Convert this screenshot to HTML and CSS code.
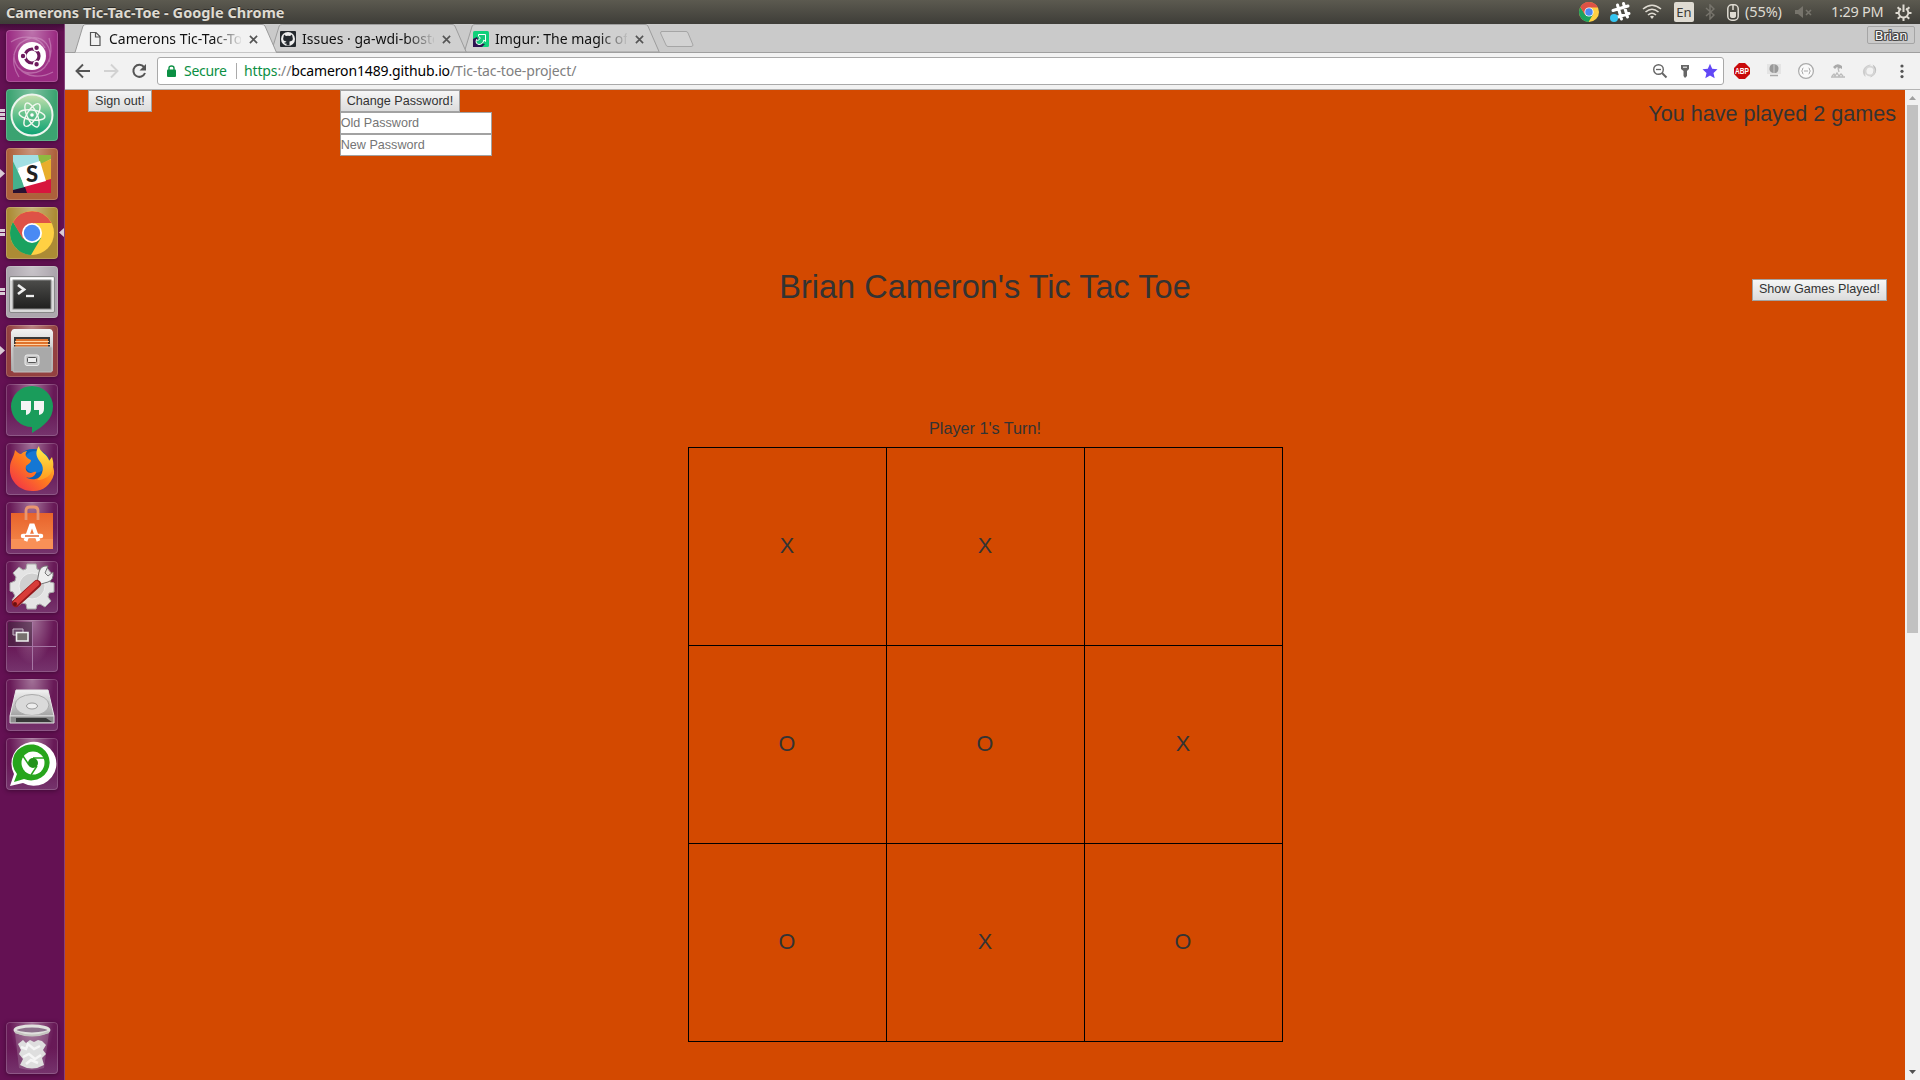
FILE: index.html
```html
<!DOCTYPE html>
<html lang="en">
<head>
<meta charset="utf-8">
<title>Camerons Tic-Tac-Toe</title>
<link rel="stylesheet" href="styles.css">
</head>
<body>
<svg class="defs" width="0" height="0">
  <defs>
    <linearGradient id="green" x1="0" y1="0" x2="0" y2="1"><stop offset="0" stop-color="#c9e2b0"/><stop offset=".5" stop-color="#5fc08a"/><stop offset="1" stop-color="#0ba173"/></linearGradient>
    <linearGradient id="metal" x1="0" y1="0" x2="0" y2="1"><stop offset="0" stop-color="#f2f2f2"/><stop offset="1" stop-color="#a2a2a2"/></linearGradient>
    <linearGradient id="screen" x1="0" y1="0" x2="0" y2="1"><stop offset="0" stop-color="#4c4c4a"/><stop offset="1" stop-color="#20201f"/></linearGradient>
    <linearGradient id="fox" x1="1" y1="0" x2="0" y2="1"><stop offset="0" stop-color="#ffd43a"/><stop offset=".45" stop-color="#ff7d1e"/><stop offset="1" stop-color="#f0254f"/></linearGradient>
    <linearGradient id="flame" x1="0" y1="0" x2="0" y2="1"><stop offset="0" stop-color="#fff04a"/><stop offset="1" stop-color="#ff9a1f"/></linearGradient>
    <linearGradient id="bag" x1="0" y1="0" x2="0" y2="1"><stop offset="0" stop-color="#e8632b"/><stop offset="1" stop-color="#f58a4d"/></linearGradient>
    <symbol id="chrome" viewBox="0 0 44 44">
      <circle cx="22" cy="22" r="22" fill="#ffd043"/>
      <path d="M3 11A22 22 0 0 0 21 44L31 27 13 27Z" fill="#1aa260"/>
      <path d="M3 11 13 28 22 22 24 12H41.500A22 22 0 0 0 3 11Z" fill="#de5246"/>
      <circle cx="22" cy="22" r="10" fill="#fff"/><circle cx="22" cy="22" r="8.200" fill="#4a8af4"/>
    </symbol>
    <symbol id="close" viewBox="0 0 10 10"><path d="M1 1 9 9M9 1 1 9" stroke="#555" stroke-width="1.800"/></symbol>
    <symbol id="tabshape" viewBox="0 0 206 29"><path d="M.5 29 3 28.500 11 2Q12 .5 14 .5H190Q192 .5 193 2L204.500 28.500V29Z"/></symbol>
  </defs>
</svg>

<header class="panel">
  <h1 class="panel-title">Camerons Tic-Tac-Toe - Google Chrome</h1>
  <div class="tray">
    <svg class="tray-chrome" width="20" height="20"><use href="#chrome"/></svg>
    <svg class="tray-slack" width="24" height="24" viewBox="0 0 24 24"><g stroke="#fff" stroke-width="3" stroke-linecap="round"><path d="M9.500 5 13.500 19M15.500 3.500 19.500 17M5 10.500 20 6M8 17.500 21 13.500"/></g><circle cx="6" cy="18" r="4" fill="#36c5f0"/></svg>
    <svg class="tray-wifi" width="20" height="16" viewBox="0 0 20 16" fill="none" stroke="#dfdbd2" stroke-width="1.600"><path d="M1 5Q10-2.500 19 5M3.500 8Q10 2.500 16.500 8M6 11Q10 7.500 14 11"/><path d="M8 12.500Q10 11 12 12.500L10 15Z" fill="#dfdbd2" stroke="none"/></svg>
    <span class="lang">En</span>
    <svg class="tray-bt" width="10" height="16" viewBox="0 0 10 16" fill="none" stroke="#77746c" stroke-width="1.500"><path d="M1 4 9 11 5 15V1L9 5 1 12"/></svg>
    <svg class="tray-mouse" width="12" height="17" viewBox="0 0 12 17" fill="none" stroke="#dfdbd2" stroke-width="1.500"><rect x=".8" y=".8" width="10.400" height="15.400" rx="4"/><path d="M6 1V6"/><path d="M3 8H9V12Q9 14 6 14 3 14 3 12Z" fill="#dfdbd2" stroke="none"/></svg>
    <span class="battery">(55%)</span>
    <svg class="tray-vol" width="18" height="12" viewBox="0 0 18 12"><path d="M0 4H3L8 0V12L3 8H0Z" fill="#77746c"/><path d="M11 4 16 9M16 4 11 9" stroke="#77746c" stroke-width="1.600"/></svg>
    <time class="clock">1:29 PM</time>
    <svg class="tray-gear" width="17" height="17" viewBox="0 0 17 17" fill="none" stroke="#dfdbd2"><path d="M6 4.600A4.800 4.800 0 1 0 11 4.600" stroke-width="1.900"/><path d="M8.500 .5V8" stroke-width="2"/><path d="M.5 9H3.500M13.500 9H16.500M2.600 3.200 4.800 5.300M14.400 3.200 12.200 5.300M2.800 14.800 5 12.600M14.200 14.800 12 12.600M8.500 13.500V17" stroke-width="2"/></svg>
  </div>
</header>

<div class="desktop">
  <nav class="launcher">
    <div class="tile dash"><svg viewBox="0 0 52 52"><g fill="none" stroke="#d7a2cb" stroke-opacity=".5" stroke-width="1.300"><path d="M13 47C3 31 7 12 25 8 38 6 47 17 43 32M43 8C49 27 40 43 25 43 13 43 8 34 8 24M5 12C17 4 33 6 39 18M47 42C36 48 21 48 13 38"/></g><circle cx="26" cy="26" r="14" fill="#fff"/><circle cx="26" cy="26" r="7" fill="none" stroke="#6d1a5d" stroke-width="3.200"/><g fill="#6d1a5d" stroke="#fff" stroke-width="1.400"><circle cx="17" cy="26" r="2.900"/><circle cx="30.600" cy="17.800" r="2.900"/><circle cx="30.600" cy="34.200" r="2.900"/></g></svg></div>
    <div class="tile atom run3"><svg viewBox="0 0 52 52"><circle cx="26" cy="26" r="20.500" fill="url(#green)" stroke="#eef5ee" stroke-width="2"/><g fill="none" stroke="#f2f8ef" stroke-width="1.400"><ellipse cx="26" cy="26" rx="13" ry="5" transform="rotate(8 26 26)"/><ellipse cx="26" cy="26" rx="13" ry="5" transform="rotate(65 26 26)"/><ellipse cx="26" cy="26" rx="13" ry="5" transform="rotate(122 26 26)"/></g><circle cx="26" cy="26" r="1.800" fill="#fff"/></svg></div>
    <div class="tile slack run1"><svg viewBox="0 0 52 52"><rect x="7" y="7" width="38" height="38" rx="2" fill="#fff"/><path d="M7 7H32L35 15 11 23 7 13Z" fill="#a2dfe3"/><path d="M32 7H45V11L34 17Z" fill="#8fb93f"/><path d="M34 16 45 11V32L39 34Z" fill="#e8ae2b"/><path d="M7 13 20 41 7 45Z" fill="#45b08c"/><path d="M18 38 45 31V45H20Z" fill="#d7153e"/><path d="M7 42 19 39 21 45H7Z" fill="#2a1131"/><path d="M12 20 34 13 40 33 18 39Z" fill="#fff"/><text class="slack-s" x="26" y="34" text-anchor="middle">S</text></svg></div>
    <div class="tile chrome run2 focused"><svg viewBox="0 0 52 52"><use href="#chrome" x="4" y="4" width="44" height="44"/></svg></div>
    <div class="tile terminal run2"><svg viewBox="0 0 52 52"><rect x="3.500" y="10.500" width="45" height="36" rx="1.500" fill="#d9d9d9" stroke="#888"/><rect x="4.500" y="11.500" width="43" height="3" fill="#fff"/><rect x="7" y="14" width="38" height="29" fill="url(#screen)" stroke="#8b8b8b"/><path d="M12 19 18 23.500 12 28" fill="none" stroke="#eee" stroke-width="2.800"/><path d="M20 30H28" stroke="#eee" stroke-width="2.300"/></svg></div>
    <div class="tile files run1"><svg viewBox="0 0 52 52"><path d="M5 7Q6 4 8 4H44Q46 4 47 7V46H5Z" fill="url(#metal)"/><rect x="8" y="12" width="36" height="11" fill="#383838"/><path d="M10 14H42V23H9Z" fill="#df722b"/><path d="M9 16.500H43M8 19.500H44" stroke="#ffd2a3" stroke-width="1"/><rect x="7" y="22" width="39" height="25" rx="1" fill="#a9a9a9" stroke="#bfbfbf"/><rect x="19" y="30" width="14" height="10.500" rx="2" fill="#c7c7c7" stroke="#ededed"/><rect x="21.500" y="32.500" width="9" height="5" rx="1" fill="#eee" stroke="#555"/></svg></div>
    <div class="tile plain"><svg viewBox="0 0 52 52"><path d="M26 2A21 20.500 0 0 1 47 22.500C47 35 38 42 26 49V43A21 20.500 0 0 1 26 2Z" fill="#1a9c5b"/><path d="M15 17H25V25Q25 30 20 31V26H15ZM28 17H38V25Q38 30 33 31V26H28Z" fill="#f4f4f4"/></svg></div>
    <div class="tile plain"><svg viewBox="0 0 52 52"><circle cx="27" cy="24" r="18" fill="#075fb8"/><circle cx="29" cy="19" r="11" fill="#1477d4"/><path d="M9 7C11 9 13 11 15 11 18 8 21 8 21 8 18 12 20 15 25 17 25 20 22 21 20 23 19 27 21 30 25 30 29 29 31 28 30 30 27 36 20 36 18 32 22 38 35 39 37 27 38 21 34 16 35 10 44 16 49 24 48 31 45 43 35 49 26 48 13 48 3 37 4 25 4 17 8 15 9 7Z" fill="url(#fox)"/><path d="M33 3C28 10 31 15 35 20 39 26 36 33 31 37 42 37 49 29 47 18L46 14 43 18C42 11 33 9 33 3Z" fill="url(#flame)"/></svg></div>
    <div class="tile plain"><svg viewBox="0 0 52 52"><path d="M5 11H47V47H5Z" fill="url(#bag)"/><path d="M5 37H47V47H5Z" fill="#f99057"/><path d="M20 18V9Q20 5 24 5H28Q32 5 32 9V18" fill="none" stroke="#e99670" stroke-width="2.800"/><path d="M19.500 39 25 23.500H27L32.500 39" fill="none" stroke="#fff" stroke-width="3.800"/><path d="M17 34H35" stroke="#fff" stroke-width="4.500" stroke-linecap="round"/><path d="M19 34H33" stroke="#e56a34" stroke-width="1.500"/></svg></div>
    <div class="tile plain"><svg viewBox="0 0 52 52"><path d="M21 3H30L31 8 35 10 40 6 46 13 42 17 44 21 48 22V31L43 32 42 36 45 40 39 46 34 43 31 44 30 48H21L20 43 16 42 12 45 6 39 9 35 7 31 4 30V22L9 20 10 16 7 12 13 6 17 9 20 8Z" fill="#e4e4e4" stroke="#a9a9a9"/><circle cx="26" cy="25" r="13" fill="#d0d0d0" stroke="#eee"/><path d="M31 22 33 11Q35 4 42 5L39 12 42 15 47 11Q48 19 42 21L35 23Z" fill="#eee" stroke="#777"/><path d="M31 23 10 42" stroke="#94191c" stroke-width="8" stroke-linecap="round"/><path d="M30.500 22.500 10 41.500" stroke="#d83c39" stroke-width="5.500" stroke-linecap="round"/><circle cx="9" cy="43" r="2" fill="#6b1010"/></svg></div>
    <div class="tile plain"><svg viewBox="0 0 52 52"><rect x="2" y="2" width="24" height="24" fill="#3a2337" opacity=".5"/><path d="M2 26.500H50M26.500 2V50" stroke="#a676a4"/><path d="M7 9H17V15H7Z" fill="#6d4a6b" stroke="#c9bac8"/><path d="M10.500 12.500H22V21H10.500Z" fill="#77706e" stroke="#eee" stroke-width="1.600"/></svg></div>
    <div class="tile plain"><svg viewBox="0 0 52 52"><path d="M10 11H42L48 37H4Z" fill="url(#metal)" stroke="#e7e7e7"/><ellipse cx="26" cy="26" rx="17" ry="10.500" fill="#dadada" stroke="#aaa"/><ellipse cx="26" cy="27" rx="5.500" ry="3" fill="#eee" stroke="#999"/><path d="M4 37H48V44H4Z" fill="#8c8c8c" stroke="#ddd"/><path d="M10 39H40L46 43H10Z" fill="#383838"/></svg></div>
    <div class="tile plain"><svg viewBox="0 0 52 52"><path d="M4 48 8 36A22.500 22 0 1 1 17 45Z" fill="#fff"/><path d="M8 44 11 36A18.500 18 0 1 1 18 41Z" fill="#27a51c"/><circle cx="27" cy="25" r="11.500" fill="#fff"/><path d="M27 20H38M23 27 17 18M31 28 25 37" stroke="#27a51c" stroke-width="1.500"/><circle cx="27" cy="25" r="5" fill="#23931b"/></svg></div>
    <div class="tile plain trash"><svg viewBox="0 0 52 52"><path d="M9 11H43L38 46Q26 50 13 46Z" fill="#ddd" opacity=".2"/><path d="M12 22 17 18 20 21 24 18 28 20 32 18 36 19 40 23 37 28 40 32 36 36 38 43Q26 50 14 43L17 37 13 32 15 28Z" fill="#dedede"/><path d="M15 25 20 27 22 22 28 27 34 24M17 35 23 32 29 37 35 33M20 42 25 38 32 41" fill="none" stroke="#f5f5f5" stroke-width="2.500"/><ellipse cx="26" cy="8" rx="17" ry="4" fill="#8c718b" stroke="#e1e1de" stroke-width="3"/><path d="M9 10Q26 17 43 10" fill="none" stroke="#c6c6c1" stroke-width="2"/></svg></div>
  </nav>

  <main class="browser">
    <div class="tabs">
      <div class="tab active"><svg class="tab-bg"><use href="#tabshape"/></svg><svg class="favicon" viewBox="0 0 16 16"><path d="M3.500 1.500H9L13 5.500V14.500H3.500ZM8.500 1.500V6H13" fill="none" stroke="#555" stroke-width="1.200"/></svg><span class="tab-title">Camerons Tic-Tac-Toe</span><svg class="tab-close"><use href="#close"/></svg></div>
      <div class="tab"><svg class="tab-bg"><use href="#tabshape"/></svg><svg class="favicon" viewBox="0 0 16 16"><rect width="16" height="16" rx="1" fill="#24292e"/><circle cx="8" cy="8" r="7" fill="#eee"/><path d="M4 3.500 6 5Q8 4.500 10 5L12 3.500 12.500 6Q14 10 9.500 10.500V14.500H6.500V12.500Q4.500 13 4 11.500 5.500 12 6.500 10.500 2 10 3.500 6Z" fill="#24292e"/></svg><span class="tab-title">Issues · ga-wdi-boston</span><svg class="tab-close"><use href="#close"/></svg></div>
      <div class="tab"><svg class="tab-bg"><use href="#tabshape"/></svg><svg class="favicon" viewBox="0 0 16 16"><rect width="16" height="16" rx="1.500" fill="#0fd07a"/><path d="M0 8 4 6 7 12 12 13 9 16H0Z" fill="#2c1250"/><path d="M5.500 3.500H12.500V10.500L10.800 9Q10 13.500 6 13.500 2 13 3.500 8.500 4.500 11 7.200 7.500 7 6 5.500 5.200Z" fill="#16c77a" stroke="#fff"/></svg><span class="tab-title">Imgur: The magic of the</span><svg class="tab-close"><use href="#close"/></svg></div>
      <svg class="new-tab" width="36" height="18" viewBox="0 0 36 18"><path d="M2.500 1.500H27Q28.500 1.500 29 3L34 15Q34 16.500 32 16.500H9Q7.500 16.500 7 15L1.500 3Q1.500 1.500 3 1.500Z" fill="#d2d2d2" stroke="#a5a5a5"/></svg>
      <span class="profile">Brian</span>
    </div>

    <div class="toolbar">
      <svg class="nav-icon" viewBox="0 0 16 16"><path d="M15 8H2M8 1.500 1.500 8 8 14.500" fill="none" stroke="#555" stroke-width="1.900"/></svg>
      <svg class="nav-icon" viewBox="0 0 16 16"><path d="M1 8H14M8 1.500 14.500 8 8 14.500" fill="none" stroke="#d2d2d2" stroke-width="1.900"/></svg>
      <svg class="nav-icon" viewBox="0 0 16 16"><path d="M13 4A6 6 0 1 0 14 10" fill="none" stroke="#555" stroke-width="2"/><path d="M15 1V7.500H8.500Z" fill="#555"/></svg>
      <div class="omnibox">
        <svg class="lock" width="9" height="12" viewBox="0 0 9 12"><rect y="4.500" width="9" height="7.500" rx="1" fill="#0b8f43"/><path d="M2 5V3Q2 1 4.500 1T7 3V5" fill="none" stroke="#0b8f43" stroke-width="1.400"/></svg>
        <span class="secure">Secure</span><span class="url"><span class="scheme">https</span><span class="dim">://</span><span class="host">bcameron1489.github.io</span><span class="path">/Tic-tac-toe-project/</span></span>
        <div class="omni-actions">
          <svg viewBox="0 0 16 16" fill="none" stroke="#666"><circle cx="6.500" cy="6.500" r="4.800" stroke-width="1.400"/><path d="M10 10 14.500 14.500" stroke-width="2"/><path d="M4 6.500H9" stroke-width="1.300"/></svg>
          <svg viewBox="0 0 16 16"><path d="M4 2H12V6L10 8V13L8 15 6.500 13V8L4 6Z" fill="#666"/><path d="M6 4.200H10" stroke="#fff"/></svg>
          <svg viewBox="0 0 16 16"><path d="M8 .8 10.200 5.800 15.500 6.300 11.500 9.900 12.700 15.200 8 12.400 3.300 15.200 4.500 9.900.5 6.300 5.800 5.800Z" fill="#6147f6"/></svg>
        </div>
      </div>
      <div class="extensions">
        <svg viewBox="0 0 16 16"><path d="M5 0H11L16 5V11L11 16H5L0 11V5Z" fill="#c90a0a"/><text class="abp" x="8" y="11" text-anchor="middle" textLength="14" lengthAdjust="spacingAndGlyphs">ABP</text></svg>
        <svg viewBox="0 0 16 16"><rect x="1" y="1" width="14" height="10" fill="#e4e4e4"/><path d="M8 1Q13 2 12.500 6T9 10H7Q3 9 3.500 5T8 1Z" fill="#999"/><path d="M8 1V10" stroke="#ccc"/><path d="M4 12.500H12" stroke="#aaa" stroke-width="1.500"/></svg>
        <svg viewBox="0 0 16 16" fill="none" stroke="#aaa"><circle cx="8" cy="8" r="7.400" fill="#fafafa" stroke-width="1.200"/><path d="M5.500 5Q4 5 4.500 7L3.500 8 4.500 9Q4 11 5.500 11M10.500 5Q12 5 11.500 7L12.500 8 11.500 9Q12 11 10.500 11M6 8H10"/></svg>
        <svg viewBox="0 0 16 16"><path d="M3 4Q7-1 12 3L12 6 10 5 9 6 7 4 5 6Z" fill="#aaa"/><path d="M8 5 9 9M2 13 4 11 5 13 7 10 9 13 11 11 13 13M1 14H15" fill="none" stroke="#bbb" stroke-width="1.300"/></svg>
        <svg viewBox="0 0 16 16" fill="none"><path d="M10.500 1.500C16 4 15.500 12 8 14.500 12 10 13 6 10.500 1.500Z" fill="#bdbdbd"/><path d="M9 1.500C2 2 -2 9 3.500 14 3 9 4 5 9 1.500Z" fill="#cdcdcd"/><circle cx="8" cy="8" r="4.500" stroke="#d5d5d5" stroke-width="1.800"/></svg>
        <svg viewBox="0 0 16 16" fill="#555"><circle cx="8" cy="3" r="1.600"/><circle cx="8" cy="8.300" r="1.600"/><circle cx="8" cy="13.600" r="1.600"/></svg>
      </div>
    </div>

    <div class="viewport">
      <div class="page">
        <div class="account">
          <button class="btn">Sign out!</button>
          <form class="password-form">
            <button class="btn" type="button">Change Password!</button>
            <input class="field" placeholder="Old Password">
            <input class="field" placeholder="New Password">
          </form>
          <p class="played">You have played 2 games</p>
        </div>
        <div class="heading">
          <h2 class="title">Brian Cameron's Tic Tac Toe</h2>
          <button class="btn">Show Games Played!</button>
        </div>
        <p class="turn">Player 1's Turn!</p>
        <div class="board">
          <div class="cell">X</div><div class="cell">X</div><div class="cell"></div>
          <div class="cell">O</div><div class="cell">O</div><div class="cell">X</div>
          <div class="cell">O</div><div class="cell">X</div><div class="cell">O</div>
        </div>
      </div>
      <div class="scrollbar">
        <svg width="7" height="15" viewBox="0 0 7 15"><path d="M0 10 3.500 6 7 10Z" fill="#a0a0a0"/></svg>
        <div class="thumb"></div>
        <svg width="7" height="15" viewBox="0 0 7 15"><path d="M0 5 3.500 9 7 5Z" fill="#505050"/></svg>
      </div>
    </div>
  </main>
</div>
</body>
</html>
```
FILE: styles.css
```css
* { box-sizing: border-box; }
body { margin: 0; width: 1920px; height: 1080px; overflow: hidden; display: flex; flex-direction: column; font-family: "Liberation Sans", Arial, sans-serif; color: #333; }
svg { display: block; flex: none; }
.defs { position: absolute; }

/* system panel */
.panel { height: 24px; flex: none; display: flex; align-items: center; padding: 0 8px 0 6px; background: linear-gradient(#5c5a50, #3e3d38); color: #dfdbd2; font-family: "Noto Sans", sans-serif; }
.panel-title { margin: 0; font-size: 14.500px; line-height: 24px; font-weight: 700; letter-spacing: .05px; white-space: nowrap; text-shadow: 0 -1px #2c2b28; }
.tray { margin-left: auto; display: flex; align-items: center; }
.tray-slack { margin-left: 9px; }
.tray-wifi { margin-left: 10px; }
.lang { margin-left: 12px; width: 20px; height: 20px; border-radius: 2px; background: #dfdbd2; color: #3c3b37; font-size: 13px; line-height: 21px; text-align: center; }
.tray-bt { margin-left: 11px; }
.tray-mouse { margin-left: 12px; }
.battery { margin-left: 6px; width: 38px; font-size: 14.500px; line-height: 22px; height: 24px; letter-spacing: -.1px; white-space: nowrap; }
.tray-vol { margin-left: 12px; }
.clock { margin-left: 18px; width: 52px; font-size: 14.500px; line-height: 22px; height: 24px; letter-spacing: -.3px; white-space: nowrap; }
.tray-gear { margin-left: 12px; }

.desktop { flex: 1; display: flex; min-height: 0; }

/* launcher */
.launcher { width: 65px; padding: 6px 0 6px 6px; display: flex; flex-direction: column; gap: 7px; background: linear-gradient(#400c38, #641153 8px); border-right: 1px solid #85417a; }
.tile { position: relative; width: 52px; height: 52px; flex: none; border-radius: 4px; box-shadow: inset 0 0 0 1px rgba(255, 255, 255, .18), 0 1px 4px rgba(30, 0, 25, .5); background: radial-gradient(ellipse at 50% 0, rgba(255, 255, 255, .38), rgba(255, 255, 255, .06) 65%), var(--tint, #6a175b); }
.tile svg { width: 52px; height: 52px; }
.plain { background: radial-gradient(ellipse at 50% 0, rgba(255, 255, 255, .4), rgba(255, 255, 255, .02) 60%), linear-gradient(#651554 50%, #73306a); }
.dash { --tint: #951f7b; }
.atom { --tint: #2f9d68; }
.slack { --tint: #a8572f; }
.chrome { --tint: #a78428; }
.terminal { --tint: #a7a0a8; }
.files { --tint: #8c3434; }
.trash { margin-top: auto; }
.slack-s { font: 900 22px Lato, sans-serif; fill: #222; }
.run1::before, .run2::before, .run3::before { content: ""; position: absolute; left: -6px; top: 21px; width: 5px; height: 9px; background: #d9ccd6; clip-path: polygon(0 0, 100% 50%, 0 100%); }
.run2::before { top: 22px; height: 7px; clip-path: none; background: linear-gradient(#d9ccd6 3px, transparent 3px 4px, #d9ccd6 4px); }
.run3::before { top: 20px; height: 11px; clip-path: none; background: linear-gradient(#d9ccd6 3px, transparent 3px 4px, #d9ccd6 4px 7px, transparent 7px 8px, #d9ccd6 8px); }
.focused::after { content: ""; position: absolute; right: -6px; top: 21px; width: 5px; height: 9px; background: #d9ccd6; clip-path: polygon(100% 0, 0 50%, 100% 100%); }

/* browser chrome */
.browser { flex: 1; display: flex; flex-direction: column; min-width: 0; }
.tabs { position: relative; height: 29px; display: flex; padding: 0 5px 0 7px; background: #cacaca; border-bottom: 1px solid #9f9f9f; font-family: "Noto Sans", sans-serif; }
.tab { position: relative; width: 206px; height: 29px; margin-right: -13px; display: flex; align-items: center; padding: 1px 0 0 15px; color: #111; }
.tab:nth-child(2) { z-index: 2; }
.tab:nth-child(3) { z-index: 1; }
.tab.active { z-index: 3; }
.tab-bg { position: absolute; left: 0; top: 0; width: 206px; height: 29px; fill: #d0d0d0; stroke: #9a9a9a; }
.tab:not(.active) .tab-bg { height: 28px; }
.tab.active .tab-bg { fill: #f2f2f2; }
.tab > .favicon, .tab-title, .tab-close { position: relative; }
.favicon { width: 16px; height: 16px; }
.tab-title { width: 132px; margin-left: 6px; padding-bottom: 1px; overflow: hidden; white-space: nowrap; font-size: 14px; line-height: 24px; -webkit-mask-image: linear-gradient(90deg, #000 104px, transparent 134px); mask-image: linear-gradient(90deg, #000 104px, transparent 134px); }
.tab-close { width: 9px; height: 9px; margin-left: 8px; }
.new-tab { margin: 6px 0 0 8px; }
.profile { margin: 2px 0 0 auto; width: 48px; height: 18px; border: 1px solid #a5a5a5; border-radius: 2px; color: #fff; font-size: 13px; line-height: 17px; text-align: center; text-shadow: 1px 0 #444, -1px 0 #444, 0 1px #444, 0 -1px #444, 1px 1px #555, -1px -1px #555, 1px -1px #555, -1px 1px #555; }

.toolbar { height: 37px; display: flex; align-items: center; padding: 0 9px 0 10px; background: #f2f2f2; border-bottom: 1px solid #b4b4b4; font-family: "Noto Sans", sans-serif; }
.nav-icon { width: 16px; height: 16px; margin-right: 12px; }
.omnibox { width: 1567px; height: 28px; margin-left: -2px; padding: 0 5px 0 9px; display: flex; align-items: center; background: #fff; border: 1px solid #a9a9a9; border-radius: 3px; font-size: 14px; white-space: nowrap; }
.secure { margin-left: 8px; width: 53px; height: 16px; line-height: 15px; border-right: 1px solid #aaa; color: #0b8f43; letter-spacing: -.3px; }
.url { margin-left: 7px; padding-bottom: 1px; letter-spacing: -.13px; }
.scheme { color: #0b8f43; }
.dim, .path { color: #808080; }
.host { color: #000; }
.omni-actions { margin-left: auto; display: flex; gap: 9px; }
.omni-actions svg { width: 16px; height: 16px; }
.extensions { margin-left: 10px; display: flex; gap: 16px; }
.extensions svg { width: 16px; height: 16px; }
.abp { font: 700 8.500px "Liberation Sans", sans-serif; fill: #fff; }

/* page */
.viewport { flex: 1; display: flex; min-height: 0; }
.page { width: 1840px; background: #d34900; }
.account { height: 171px; display: flex; align-items: flex-start; padding: 0 9px 0 23px; }
.btn { height: 22px; padding: 0 6px; border: 1px solid #a2a2a2; border-radius: 0; background: linear-gradient(#f6f6f6, #dcdcdc); color: #333; font: 12.600px/19px "Liberation Sans", Arial, sans-serif; white-space: nowrap; }
.password-form { width: 152px; margin-left: 188px; display: flex; flex-direction: column; align-items: flex-start; }
.field { width: 152px; height: 22px; padding: 0 1px 0 0; border: 1px solid #a2a2a2; background: #fff; font: 12.600px "Liberation Sans", Arial, sans-serif; }
.field::placeholder { color: #757575; }
.played { margin: 12px 0 0 auto; font-size: 21.600px; line-height: 24px; }
.heading { height: 154px; display: grid; grid-template-columns: 1fr auto 1fr; align-items: start; padding: 0 18px; }
.title { grid-column: 2; margin: 8px 0 0; font-size: 32.500px; line-height: 36px; font-weight: 400; }
.heading .btn { justify-self: end; margin-top: 18px; padding-bottom: 2px; }
.turn { margin: 4px 0 0; height: 28px; text-align: center; font-size: 16.200px; line-height: 18px; }
.board { width: 595px; margin: 0 0 0 623px; display: grid; grid-template-columns: repeat(3, 198px); grid-auto-rows: 198px; border-left: 1px solid #000; border-top: 1px solid #000; }
.cell { padding: 0 1px 2px 0; border-right: 1px solid #000; border-bottom: 1px solid #000; display: flex; align-items: center; justify-content: center; font-size: 21.600px; line-height: 24px; }
.scrollbar { width: 15px; background: #f1f1f1; display: flex; flex-direction: column; align-items: center; }
.thumb { width: 11px; height: 528px; margin-bottom: auto; background: #c1c1c1; }
```
